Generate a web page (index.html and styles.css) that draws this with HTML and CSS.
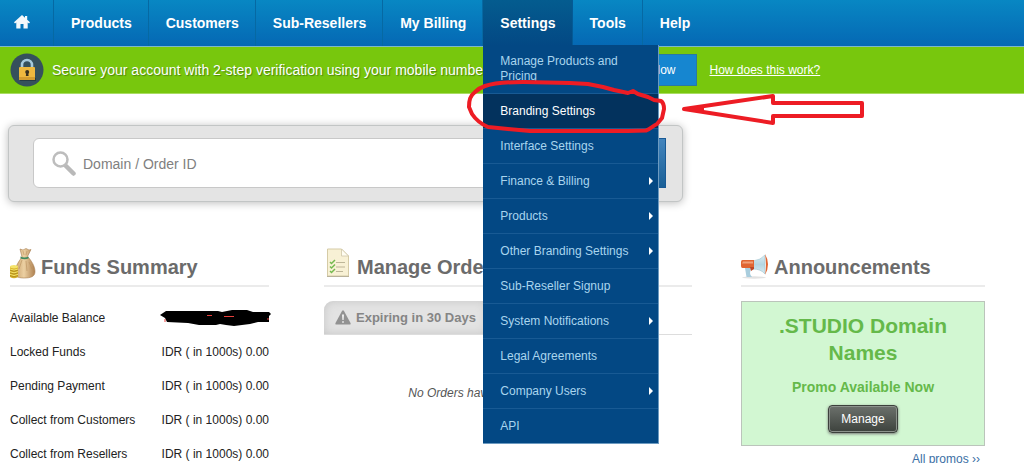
FILE: index.html
```html
<!DOCTYPE html>
<html lang="en">
<head>
<meta charset="utf-8">
<title>Reseller Control Panel</title>
<link rel="stylesheet" href="styles.css">
</head>
<body>
<nav class="nav" aria-label="Main">
  <ul class="nav-list">
    <li class="nav-item nav-home"><a href="#" aria-label="Home">
      <svg width="16" height="14" viewBox="0 0 16 14"><path d="M8 0 0 7.200l1 1.200 1.300-1V13.500h4.200V9h3v4.500h4.200V7.400l1.300 1 1-1.200-2.800-2.500V1h-2.200v1.800z" fill="#f4f8fb"/></svg>
    </a></li>
    <li class="nav-item"><a href="#">Products</a></li>
    <li class="nav-item"><a href="#">Customers</a></li>
    <li class="nav-item"><a href="#">Sub-Resellers</a></li>
    <li class="nav-item"><a href="#">My Billing</a></li>
    <li class="nav-item nav-open"><a href="#">Settings</a>
      <ul class="menu">
        <li class="menu-item menu-tall"><a href="#">Manage Products and Pricing</a></li>
        <li class="menu-item menu-current"><a href="#">Branding Settings</a></li>
        <li class="menu-item"><a href="#">Interface Settings</a></li>
        <li class="menu-item menu-more"><a href="#">Finance &amp; Billing</a></li>
        <li class="menu-item menu-more"><a href="#">Products</a></li>
        <li class="menu-item menu-more"><a href="#">Other Branding Settings</a></li>
        <li class="menu-item"><a href="#">Sub-Reseller Signup</a></li>
        <li class="menu-item menu-more"><a href="#">System Notifications</a></li>
        <li class="menu-item"><a href="#">Legal Agreements</a></li>
        <li class="menu-item menu-more"><a href="#">Company Users</a></li>
        <li class="menu-item"><a href="#">API</a></li>
      </ul>
      <svg class="marker" width="410" height="60" viewBox="460 76 410 60" fill="none" stroke="#ed1c24" stroke-linejoin="round" aria-hidden="true">
        <path stroke-width="4" d="M485 86C497 82 510 82 523 82L570 83 588 84 603 87 614 90 628 93 633 91 638 94 648 97 654 100 661 101C664 103 664 106 664 109L662 118 657 124C652 126 651 129 646 130.500L628 131H530L508 129 488 127C481 124 476 120 472 114L469 107C469 100 470 96 475 92Q479 88 485 86Z"/>
        <path stroke-width="4" d="M684 109 773 96V103H862V116H773V123Z"/>
        <path fill="#ed1c24" stroke="none" d="M684 109 704 105V113Z"/>
      </svg>
    </li>
    <li class="nav-item"><a href="#">Tools</a></li>
    <li class="nav-item nav-last"><a href="#">Help</a></li>
  </ul>
</nav>

<section class="notice" aria-label="Account security">
  <svg class="notice-icon" width="34" height="34" viewBox="0 0 34 34" aria-hidden="true">
    <circle cx="17" cy="17" r="16.500" fill="#35505c"/>
    <path d="M12 16v-4a5 5 0 0 1 10 0v4" fill="none" stroke="#a5c9dc" stroke-width="2.600"/>
    <path d="M10 25h16v3H10z" fill="#263a44"/>
    <rect x="9" y="14" width="16" height="13" rx="1" fill="#eeb83f"/>
    <path d="M9 24h16v2a1 1 0 0 1-1 1H10a1 1 0 0 1-1-1z" fill="#d39c2f"/>
    <circle cx="17.200" cy="19" r="2" fill="#38301f"/><path d="M16.300 19h1.800l.5 4h-2.800z" fill="#38301f"/>
  </svg>
  <p class="notice-text">Secure your account with 2-step verification using your mobile number</p>
  <button class="notice-button" type="button">Enable Now</button>
  <a class="notice-link" href="#">How does this work?</a>
</section>

<main class="main">
  <form class="search" role="search">
    <div class="search-box">
      <svg width="24" height="25" viewBox="0 0 24 25" aria-hidden="true"><path d="m13 14 8.500 8.500" stroke="#b9b9b9" stroke-width="4.500" stroke-linecap="round"/><circle cx="8.500" cy="8.500" r="7" fill="#fff" stroke="#bdbdbd" stroke-width="2.500"/></svg>
      <input class="search-input" type="text" placeholder="Domain / Order ID" aria-label="Domain / Order ID">
    </div>
    <button class="search-button" type="submit">Search</button>
  </form>

  <div class="columns">
    <section class="funds">
      <h2 class="heading">
        <svg width="26" height="31" viewBox="0 0 26 31" aria-hidden="true">
          <defs><linearGradient id="bag"><stop offset="0" stop-color="#c9a26e"/><stop offset=".45" stop-color="#ecd0a2"/><stop offset="1" stop-color="#ae8050"/></linearGradient></defs>
          <path d="m10 1 3 1 3-1.500 3 1.500 2-.5-3.500 7c4 4 7.500 10 7.500 15 0 5-4 6.500-11 6.500S4.500 28 5 23c.5-5 4-10 7-14z" fill="url(#bag)" stroke="#a98052" stroke-width=".6"/>
          <path d="M10.500 8.500q4 2 8 0v2q-4 1.500-8 0z" fill="#3e8a5e"/>
          <path d="m12 12-3 9m7-8 1 10m2-9 3 7M13 3l1 4m3-4-1 4" stroke="#b9905e" stroke-width=".6" fill="none"/>
          <path d="M0 18.500h8V29q-4 2.500-8 0z" fill="#d6af27"/><ellipse cx="4" cy="18.800" rx="4" ry="1.700" fill="#f4e36b"/>
          <path d="M0 21q4 2.300 8 0m-8 2.700q4 2.300 8 0m-8 2.700q4 2.300 8 0" stroke="#f4e36b" fill="none"/>
          <path d="M0 22.200q4 2.300 8 0m-8 2.700q4 2.300 8 0m-8 2.700q4 2.300 8 0" stroke="#9c7b18" stroke-width=".6" fill="none"/>
        </svg>
        Funds Summary</h2>
      <table class="balances">
        <tr><th scope="row">Available Balance</th><td>
          <svg class="blackout" width="111" height="16" viewBox="0 0 111 16" role="img" aria-label="Hidden amount"><path d="M0 5 6 1H58L62 2 72 0H87L93 2H109L111 4 109 6V12H98L90 14 74 16 66 15 60 14 56 15H39L28 13 7 12 5 8Z"/><path d="M47 5.500h5m12 1h10M5 9v3m102-3h2" stroke="#e8403c"/></svg>
        </td></tr>
        <tr><th scope="row">Locked Funds</th><td>IDR ( in 1000s) 0.00</td></tr>
        <tr><th scope="row">Pending Payment</th><td>IDR ( in 1000s) 0.00</td></tr>
        <tr><th scope="row">Collect from Customers</th><td>IDR ( in 1000s) 0.00</td></tr>
        <tr><th scope="row">Collect from Resellers</th><td>IDR ( in 1000s) 0.00</td></tr>
      </table>
    </section>

    <section class="orders">
      <h2 class="heading">
        <svg width="28" height="31" viewBox="0 0 28 31" aria-hidden="true">
          <path d="M3.500 1h14l7 7v20h-21z" fill="#f8f1d5" stroke="#d5cba6"/><path d="M3 28.500h22" stroke="#b9b29a"/>
          <path d="M17.500 1v7h7z" fill="#fffdf2" stroke="#cfc7aa" stroke-width=".8"/>
          <path d="M12 14.500h9m-9 4.500h9m-9 4.500h7" stroke="#bdb698" stroke-width="1.200"/>
          <path d="m6 14 1.500 1.500L11 12m-5 6.500L7.500 20l3.500-3.500M6 23l1.500 1.500L11 21" stroke="#73ba4f" stroke-width="1.500" fill="none"/>
        </svg>
        Manage Orders</h2>
      <div class="tabs">
        <button class="tab" type="button">
          <svg width="16" height="15" viewBox="0 0 16 15" aria-hidden="true"><path d="M7 1q1-1.500 2 0l6.500 12q.5 1.500-1 1.500h-13Q0 14.500.5 13z" fill="#929292"/><path d="M7 4.500h2L8.600 10H7.400zM7.200 11.200h1.600v1.600H7.200z" fill="#f2f2f2"/></svg>
          Expiring in 30 Days</button>
      </div>
      <p class="empty">No Orders have expiry within 30 days</p>
    </section>

    <section class="news">
      <h2 class="heading">
        <svg width="28" height="25" viewBox="0 0 28 25" aria-hidden="true">
          <defs><linearGradient id="horn" x2="0" y2="1"><stop offset="0" stop-color="#d9edf4"/><stop offset=".5" stop-color="#b5d6e2"/><stop offset="1" stop-color="#d9edf4"/></linearGradient></defs>
          <ellipse cx="13" cy="23.500" rx="12" ry="1.200" fill="#e2e2e2"/>
          <path d="M4 14h6l-1 5q0 2 2 4H5.500Z" fill="#a9cddd"/>
          <path d="M12 7q8-1 12-6v19q-4-5-12-5z" fill="url(#horn)" stroke="#9ec2cf" stroke-width=".6"/>
          <path d="M1.500 6H13v8H1.500Q0 14 0 12V8q0-2 1.500-2z" fill="#e06532"/><path d="M2 7.500h10v2H1z" fill="#f0a17a"/><path d="M9 13h4v2l-3 2z" fill="#bd4726"/>
          <path d="M24 0q6 10 0 21 2-10 0-21z" fill="#e06532"/>
        </svg>
        Announcements</h2>
      <div class="promo">
        <h3 class="promo-title">.STUDIO Domain Names</h3>
        <p class="promo-text">Promo Available Now</p>
        <button class="promo-button" type="button">Manage</button>
      </div>
      <a class="promo-all" href="#">All promos ››</a>
    </section>
  </div>
</main>
</body>
</html>
```

FILE: styles.css
```css
* { box-sizing: border-box; }

body {
  margin: 0;
  background: #fff;
  color: #222;
  font: 12px/14px "Liberation Sans", Arial, sans-serif;
}

ul, p, h2, h3 { margin: 0; padding: 0; }
ul { list-style: none; }
svg { display: block; flex: none; }
button, input { font-family: inherit; }

.nav {
  background: linear-gradient(#0887c3, #0568b4);
  border-bottom: 1px solid #7eb8c8;
}
.nav-list { display: flex; }
.nav-item {
  position: relative;
  border-right: 1px solid #0669a3;
}
.nav-last { border-right: 0; }
.nav-item > a {
  display: flex;
  align-items: center;
  height: 46px;
  padding: 0 16px 0 17px;
  color: #fff;
  font-size: 14px;
  font-weight: bold;
  line-height: 18px;
  text-decoration: none;
  white-space: nowrap;
}
.nav-home > a { padding: 0 23px 2px 14px; }
.nav-open { z-index: 2; border-right-color: #045a96; }
.nav-open > a { background: linear-gradient(#045c8f, #034884); }

.menu {
  position: absolute;
  top: 45px;
  left: 0;
  width: 176px;
  background: #034884;
  border-right: 1px solid #6c9ac0;
  border-bottom: 1px solid #6c9ac0;
}
.menu-item { border-bottom: 1px solid #185a94; }
.menu-item:last-child { border-bottom: 0; }
.menu-item > a {
  display: flex;
  align-items: center;
  height: 34px;
  padding: 0 8px 0 17px;
  color: #a9d5ee;
  line-height: 15px;
  text-decoration: none;
}
.menu-tall > a { height: 48px; padding-right: 32px; }
.menu-current { background: #03325d; }
.menu-current > a { color: #fff; }
.menu-more > a { justify-content: space-between; padding-right: 5px; }
.menu-more > a::after {
  content: "";
  border: solid transparent;
  border-width: 4px 0 4px 4px;
  border-left-color: #fff;
}
.marker {
  position: absolute;
  top: 76px;
  left: -23px;
  pointer-events: none;
}

.notice {
  display: flex;
  align-items: center;
  height: 47px;
  padding: 0 10px;
  background: #78c70d;
  border-bottom: 1px solid #a9dc62;
  color: #fff;
  white-space: nowrap;
}
.notice-text {
  margin-left: 8px;
  font-size: 14px;
  line-height: 18px;
  text-shadow: 1px 1px 1px #4d850b;
}
.notice-button {
  height: 32px;
  margin-left: 102px;
  padding: 0 20px;
  background: #1686d0;
  border: 1px solid #2a78a2;
  color: #fff;
  font-size: 12px;
}
.notice-link { margin-left: 13px; color: #fff; }

.main { padding: 31px 8px 0; }

.search {
  display: flex;
  width: 67%;
  padding: 12px 16px 13px 24px;
  background: #e4e4e4;
  border: 1px solid #c2c5c5;
  border-radius: 6px;
  box-shadow: 0 1px 9px #bbb;
}
.search-box {
  display: flex;
  flex: 1;
  align-items: center;
  height: 50px;
  padding-left: 18px;
  background: #fff;
  border: 1px solid #c8c8c8;
  border-radius: 6px 0 0 6px;
}
.search-input {
  flex: 1;
  min-width: 0;
  padding: 2px 7px 0;
  background: none;
  border: 0;
  color: #666;
  font-size: 14px;
}
.search-input::placeholder { color: #808080; opacity: 1; }
.search-button {
  padding: 0 30px;
  background: linear-gradient(#4485bd, #1a6097);
  border: 1px solid #195a95;
  color: #fff;
}

.columns {
  display: flex;
  align-items: flex-start;
  padding: 44px 31px 0 2px;
}
.funds { flex: 259 1 0; }
.orders { flex: 368 1 0; margin-left: 55px; }
.news { flex: 244 1 0; margin-left: 49px; }

.heading {
  display: flex;
  align-items: flex-end;
  gap: 5px;
  height: 41px;
  margin-bottom: 14px;
  padding-bottom: 6px;
  border-bottom: 2px solid #ebebeb;
  color: #6b6b6b;
  font-size: 20px;
  line-height: 24px;
  white-space: nowrap;
}

.balances { width: 100%; border-collapse: collapse; }
.balances th, .balances td { height: 34px; padding: 0; white-space: nowrap; }
.balances th { font-weight: normal; text-align: left; }
.balances td { text-align: right; }
.blackout { margin: 0 -2px 0 auto; }

.tabs { border-bottom: 1px solid #ddd; }
.tab {
  display: flex;
  align-items: center;
  gap: 5px;
  height: 33px;
  padding: 0 10px 0 11px;
  background: #e3e3e3;
  border: 0;
  border-radius: 9px 0 0 0;
  box-shadow: inset 0 0 10px #c6c6c6;
  color: #858585;
  font-size: 13px;
  font-weight: bold;
}
.empty {
  padding-top: 51px;
  color: #555;
  font-style: italic;
  text-align: center;
}

.promo {
  padding: 10px 30px 12px;
  background: #d2f7d2;
  border: 1px solid #bbc4bb;
  color: #65b94a;
  text-align: center;
}
.promo-title { font-size: 21px; line-height: 27px; }
.promo-text {
  margin: 13px 0 10px;
  font-size: 14px;
  font-weight: bold;
  line-height: 16px;
}
.promo-button {
  height: 28px;
  padding: 0 12px;
  background: linear-gradient(#6c716c, #3d423d);
  border: 1px solid #3c413c;
  border-radius: 4px;
  box-shadow: inset 0 0 0 1px #8d948d, 0 1px 3px #777;
  color: #fff;
  font-size: 12px;
}
.promo-all {
  display: block;
  margin-top: 6px;
  padding-right: 5px;
  color: #3b6fa5;
  text-align: right;
  text-decoration: none;
}
```
